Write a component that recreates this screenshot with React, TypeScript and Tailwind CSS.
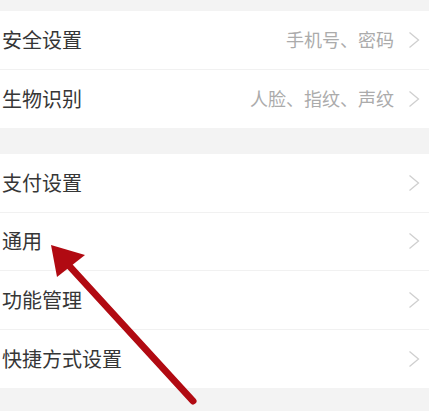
import React from "react";

type Item = { label: string; hint?: string };

const groups: Item[][] = [
  [
    { label: "安全设置", hint: "手机号、密码" },
    { label: "生物识别", hint: "人脸、指纹、声纹" },
  ],
  [
    { label: "支付设置" },
    { label: "通用" },
    { label: "功能管理" },
    { label: "快捷方式设置" },
  ],
];

const Chevron: React.FC = () => (
  <svg width="12" height="18" viewBox="0 0 12 18" className="shrink-0">
    <path d="M1.5 1.5 L10.5 9 L1.5 16.5" fill="none" stroke="#cfcfcf" strokeWidth="1.3" />
  </svg>
);

const Row: React.FC<{ item: Item; last: boolean }> = ({ item, last }) => (
  <div
    className={`flex h-[58.5px] items-center justify-between pl-[2px] pr-[9px] ${
      last ? "" : "border-b border-[#f1f1f1]"
    }`}
  >
    <span className="text-[20px] text-[#363636]">{item.label}</span>
    <div className="flex items-center gap-[14px]">
      {item.hint && <span className="text-[18px] text-[#ababab]">{item.hint}</span>}
      <Chevron />
    </div>
  </div>
);

export default function App() {
  return (
    <div
      className="relative h-[411px] w-[429px] overflow-hidden bg-[#f3f3f3] pt-[11px]"
      style={{ fontFamily: '"Noto Sans CJK SC", "Noto Sans", sans-serif' }}
    >
      {groups.map((g, gi) => (
        <div key={gi} className={`bg-white ${gi > 0 ? "mt-[26px]" : ""}`}>
          {g.map((item, i) => (
            <Row key={item.label} item={item} last={i === g.length - 1} />
          ))}
        </div>
      ))}

      {/* annotation arrow */}
      <svg className="absolute left-0 top-0" width="429" height="411" viewBox="0 0 429 411">
        <line x1="193" y1="401" x2="62" y2="258" stroke="#b10a12" strokeWidth="7" strokeLinecap="round" />
        <polygon points="51,245 85,255 57,277" fill="#b10a12" />
      </svg>
    </div>
  );
}
